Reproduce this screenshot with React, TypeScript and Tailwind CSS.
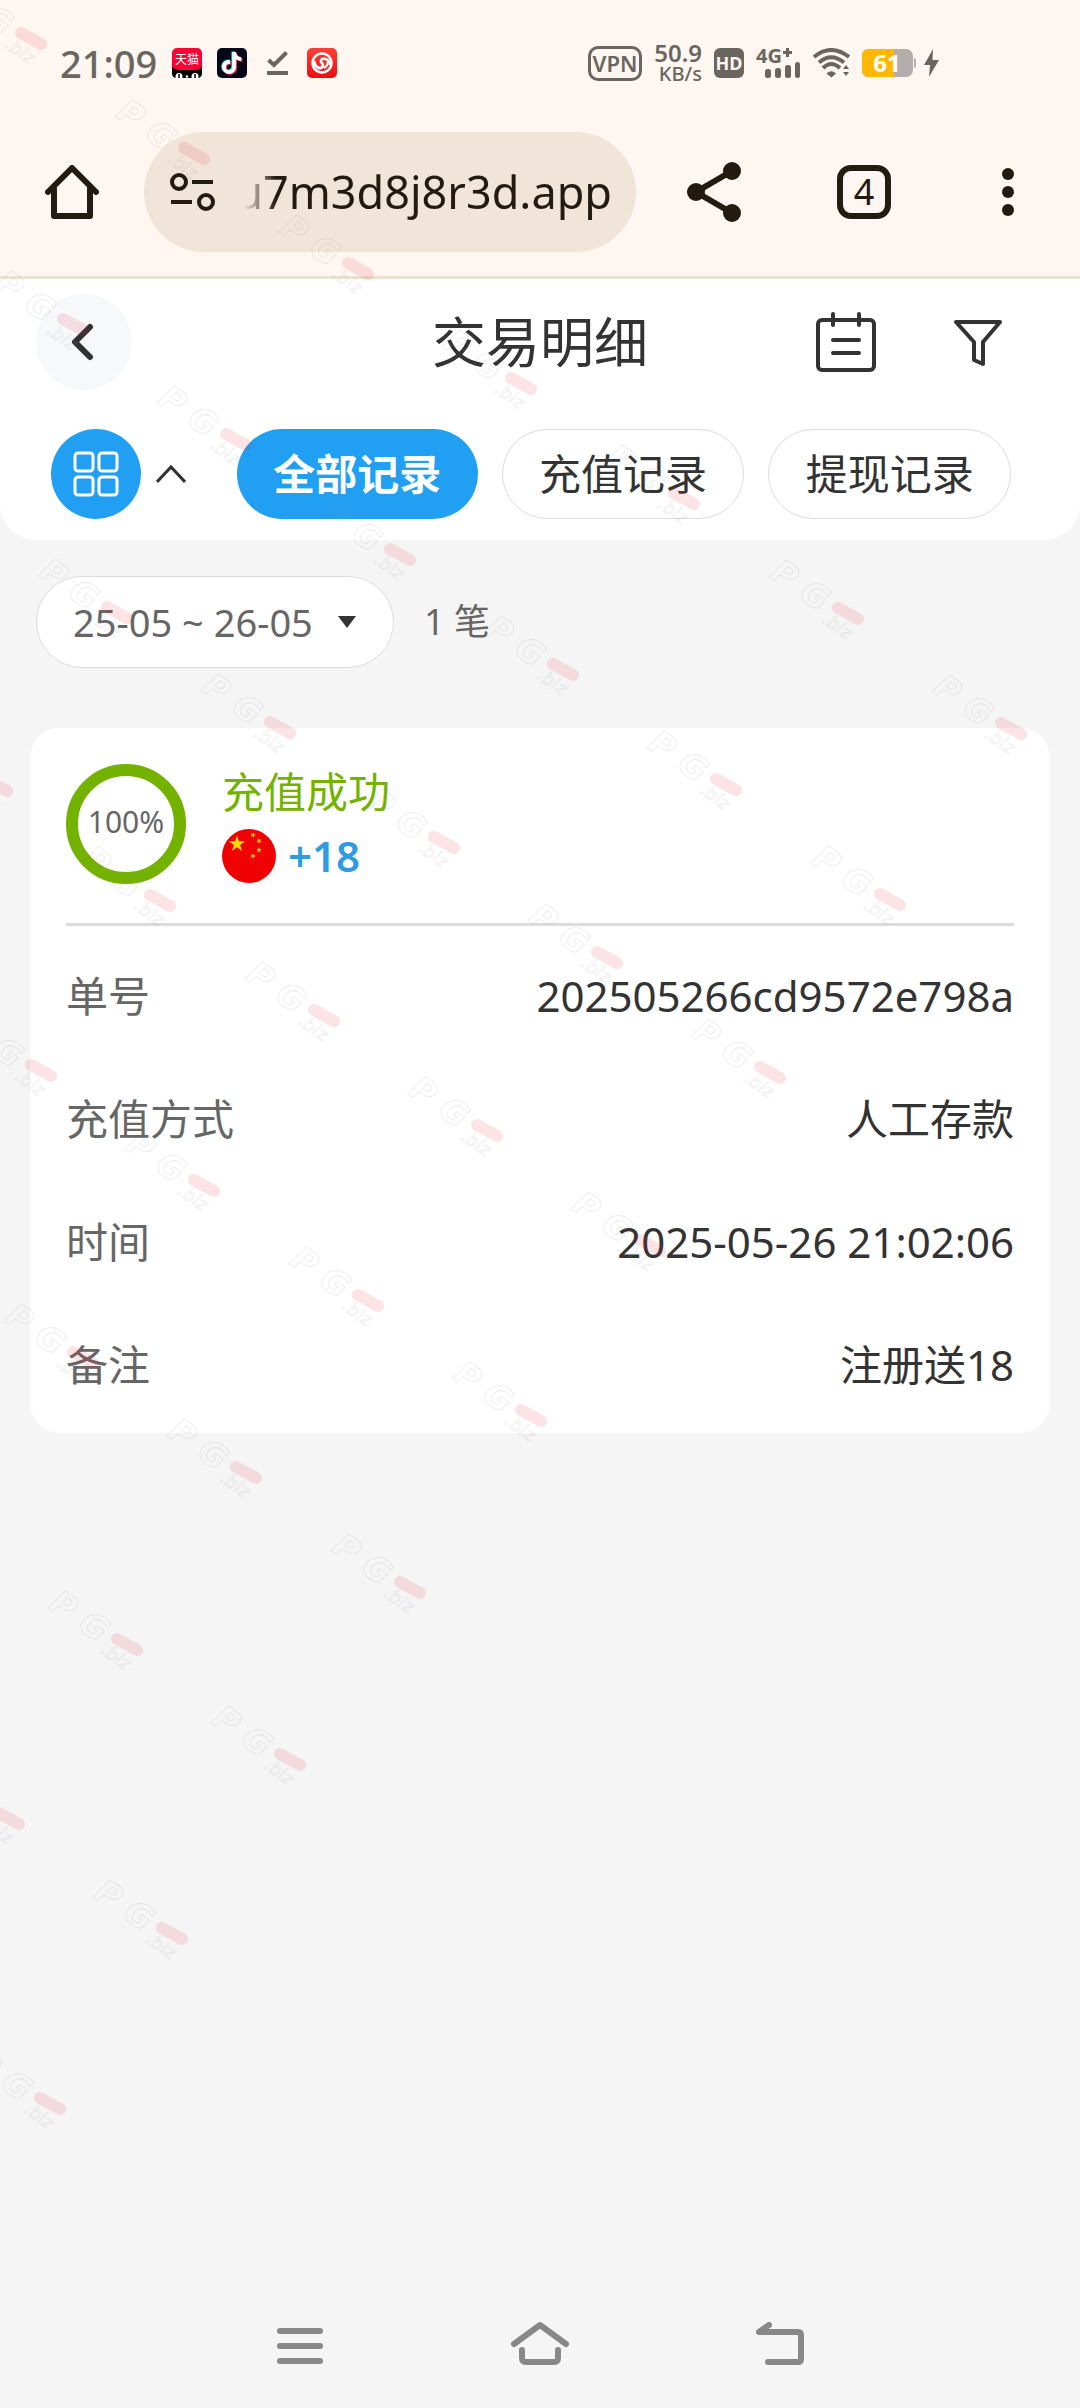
import { useState } from 'react';

const tabs = ['全部记录', '充值记录', '提现记录'];

const details = [
  { label: '单号', value: '202505266cd9572e798a' },
  { label: '充值方式', value: '人工存款' },
  { label: '时间', value: '2025-05-26 21:02:06' },
  { label: '备注', value: '注册送18' },
];

// Diagonal runs of the watermark: start point and number of marks in the run
const markRuns = [
  { x: 31, y: 39, count: 7 },
  { x: 73, y: 325, count: 6 },
  { x: 117, y: 613, count: 5 },
  { x: -3, y: 786, count: 5 },
  { x: 41, y: 1071, count: 4 },
  { x: 83, y: 1358, count: 3 },
  { x: 127, y: 1645, count: 2 },
  { x: 9, y: 1819, count: 2 },
  { x: 50, y: 2104, count: 1 },
];

const marks = markRuns.flatMap((run) =>
  Array.from({ length: run.count }, (_, i) => ({ x: run.x + Math.round(i * 163.3), y: run.y + i * 115 })),
);

const TIKTOK =
  'M448,209.91a210.06,210.06,0,0,1-122.77-39.25V349.38A162.55,162.55,0,1,1,185,188.31V278.2a74.62,74.62,0,1,0,52.23,71.18V0l88,0a121.18,121.18,0,0,0,1.86,22.17h0A122.18,122.18,0,0,0,381,102.39a121.43,121.43,0,0,0,67,20.14Z';

const STAR = 'M0,-10 L2.3,-3.1 L9.5,-3.1 L3.7,1.2 L5.9,8.1 L0,3.9 L-5.9,8.1 L-3.7,1.2 L-9.5,-3.1 L-2.3,-3.1 Z';

function Watermark() {
  return (
    <div className="pointer-events-none absolute inset-0 overflow-hidden" aria-hidden="true">
      {marks.map((m) => (
        <svg
          key={`${m.x}-${m.y}`}
          className="absolute h-[120px] w-[140px] overflow-visible"
          style={{ left: m.x - 100, top: m.y - 75 }}
          viewBox="-100 -75 140 120"
        >
          <g transform="rotate(35)" fill="none" stroke="#8a8f96" fontFamily="'DejaVu Sans', sans-serif" fontStyle="italic">
            <text x="-87" y="15" fontSize="33" fontWeight="bold" strokeOpacity="0.17">P</text>
            <text x="-51" y="15" fontSize="33" fontWeight="bold" strokeOpacity="0.17">G</text>
            <text x="-18" y="22" fontSize="18" strokeOpacity="0.13">.biz</text>
          </g>
          <path d="M-10 -6 L10 5" fill="none" stroke="#e0243c" strokeOpacity="0.13" strokeWidth="12" strokeLinecap="round" />
        </svg>
      ))}
    </div>
  );
}

function StatusBar() {
  return (
    <div className="flex h-[126px] items-center justify-between pr-[141px] pl-[60px] text-[#6b6560]">
      <div className="flex items-center gap-[15px]">
        <span className="text-[38px] leading-none font-medium">21:09</span>
        <svg className="h-[30px] w-[30px]" viewBox="0 0 30 30">
          <rect width="30" height="30" rx="5" fill="#ff0036" />
          <path d="M0 19 Q4 23 9 22 H21 Q26 23 30 19 V25 Q30 30 25 30 H5 Q0 30 0 25 Z" fill="#000" />
          <circle cx="7" cy="28.500" r="3.500" fill="#fff" />
          <circle cx="23" cy="28.500" r="3.500" fill="#fff" />
          <path d="M7 26 v4 M23 26 v4" stroke="#000" strokeWidth="1.500" />
          <circle cx="15" cy="28.500" r="1.200" fill="#fff" />
          <text x="15" y="16" textAnchor="middle" fontSize="12" fill="#fff" fontFamily="'Noto Sans CJK SC', sans-serif">天猫</text>
        </svg>
        <svg className="h-[30px] w-[30px]" viewBox="0 0 30 30">
          <rect width="30" height="30" rx="5" fill="#060818" />
          <g transform="translate(5 4) scale(0.043)">
            <path d={TIKTOK} fill="#25f4ee" transform="translate(-18 -14)" />
            <path d={TIKTOK} fill="#fe2c55" transform="translate(24 18)" />
            <path d={TIKTOK} fill="#fff" />
          </g>
        </svg>
        <svg className="h-[30px] w-[30px]" viewBox="0 0 30 30" fill="none" stroke="currentColor" strokeWidth="4">
          <path d="M6.500 12 L12 17 L24.500 4.500" />
          <path d="M5 25 H26" />
        </svg>
        <svg className="h-[30px] w-[30px]" viewBox="0 0 30 30" fill="none" stroke="#fff">
          <defs>
            <linearGradient id="coil" x1="0" y1="0" x2="0" y2="1">
              <stop offset="0" stopColor="#fb4136" />
              <stop offset="1" stopColor="#f00c12" />
            </linearGradient>
          </defs>
          <rect width="30" height="30" rx="5" fill="url(#coil)" stroke="none" />
          <circle cx="15" cy="15" r="9.500" strokeWidth="2.500" />
          <path d="M7 13 C8 20 14 22 16 18 C17 15 13 15 14 12.500 C15 9.500 22 10 23 17" strokeWidth="2.800" />
          <path d="M17 20 Q21 18 20.500 14" strokeWidth="2" />
        </svg>
      </div>

      <div className="flex items-center gap-3">
        <span className="flex h-[35px] w-[54px] items-center justify-center rounded-[10px] border-3 border-current text-[22px] leading-none font-semibold">
          VPN
        </span>
        <span className="flex w-[48px] flex-col items-end">
          <span className="text-[24px] leading-[22px] font-semibold">50.9</span>
          <span className="text-[20px] leading-[20px] font-medium">KB/s</span>
        </span>
        <span className="flex h-[30px] w-[30px] items-center justify-center rounded-[6px] bg-[#6b6560] text-[18px] leading-none font-bold text-[#fef6f0]">
          HD
        </span>
        <svg className="h-[30px] w-[45px] overflow-visible" viewBox="0 0 45 30" fill="currentColor">
          <text x="0" y="15" fontSize="20" fontWeight="bold" fontFamily="'Noto Sans', sans-serif">4G</text>
          <path d="M27 4.500 h9 M31.500 0 v9" stroke="currentColor" strokeWidth="3" />
          <rect x="9" y="21" width="6" height="9" rx="2.500" />
          <rect x="19" y="20" width="6" height="10" rx="2.500" />
          <rect x="29" y="17" width="6" height="13" rx="2.500" />
          <rect x="39" y="14" width="5" height="16" rx="2.500" />
        </svg>
        <svg className="h-[30px] w-[37px]" viewBox="0 0 37 30" fill="none" stroke="currentColor" strokeWidth="4">
          <path d="M1 9 Q18 -5 36 9" />
          <path d="M6 14.500 Q18 4 31 14.500" />
          <path d="M10 20 Q18 12 27 20" />
          <path d="M13.500 25.500 Q18 21 23 25.500 L18.500 29.500 Z" fill="currentColor" stroke="none" />
          <path d="M30 21 l3 -4 l3 4 Z M30 24 h6 l-3 4 Z" fill="currentColor" stroke="none" />
        </svg>
        <svg className="h-[28px] w-[54px] overflow-visible" viewBox="0 0 54 28">
          <rect width="51" height="28" rx="7" fill="#b5adab" />
          <path d="M52 9 q2 0 2 3 v4 q0 3 -2 3 Z" fill="#b5adab" />
          <path d="M7 0 H32 V28 H7 Q0 28 0 21 V7 Q0 0 7 0 Z" fill="#ffb800" />
          <text x="25" y="23" textAnchor="middle" fontSize="24" fontWeight="bold" fill="#fff" fontFamily="'Noto Sans', sans-serif">61</text>
        </svg>
        <svg className="-ml-1 h-[28px] w-[15px]" viewBox="0 0 15 28" fill="currentColor">
          <path d="M9 0 L0 16 H6 L5 28 L15 11 H8.500 Z" />
        </svg>
      </div>
    </div>
  );
}

function BrowserBar() {
  return (
    <div className="flex items-center pt-1.5 pb-6 text-[#231a12]">
      <button className="flex h-[120px] w-36 items-center justify-center" aria-label="Home">
        <svg className="h-[54px] w-[54px]" viewBox="0 0 54 54" fill="none" stroke="currentColor" strokeWidth="6" strokeLinejoin="round" strokeLinecap="round">
          <path d="M3 27 L27 3 L51 27" />
          <path d="M9 24 V51 H45 V24" />
        </svg>
      </button>

      <div className="flex h-[120px] min-w-0 flex-1 items-center gap-4 rounded-full bg-[#f1e4d8] px-6">
        <svg className="h-[48px] w-[48px] shrink-0" viewBox="0 0 48 48" fill="none" stroke="currentColor" strokeWidth="4">
          <circle cx="11" cy="14" r="7" />
          <path d="M24 14 H45" />
          <path d="M3 34 H24" />
          <circle cx="38" cy="34" r="7" />
        </svg>
        <input
          className="w-full min-w-0 bg-transparent text-right text-[45px] leading-[60px] outline-none [mask-image:linear-gradient(to_right,transparent_12px,#000_44px)]"
          aria-label="Address"
          defaultValue="u7m3d8j8r3d.app"
        />
      </div>

      <div className="flex pl-3">
        <button className="flex h-[120px] w-36 items-center justify-center" aria-label="Share">
          <svg className="h-[60px] w-[66px]" viewBox="0 0 66 60" fill="currentColor" stroke="currentColor" strokeWidth="6">
            <path d="M45 9 L9 30 L45 51" fill="none" />
            <circle cx="45" cy="9" r="9" stroke="none" />
            <circle cx="9" cy="30" r="9" stroke="none" />
            <circle cx="45" cy="51" r="9" stroke="none" />
          </svg>
        </button>
        <button className="flex h-[120px] w-36 items-center justify-center" aria-label="Tabs">
          <span className="flex h-[54px] w-[54px] items-center justify-center rounded-[14px] border-6 border-current text-[36px] leading-none">
            4
          </span>
        </button>
        <button className="flex h-[120px] w-36 items-center justify-center" aria-label="Menu">
          <svg className="h-[48px] w-[12px]" viewBox="0 0 12 48" fill="currentColor">
            <circle cx="6" cy="6" r="6" />
            <circle cx="6" cy="24" r="6" />
            <circle cx="6" cy="42" r="6" />
          </svg>
        </button>
      </div>
    </div>
  );
}

function PageHeader() {
  const [active, setActive] = useState(0);

  return (
    <header className="rounded-b-[36px] bg-white pt-[15px] pb-[21px]">
      <div className="grid h-[96px] grid-cols-[1fr_auto_1fr] items-center pr-[78px] pl-9">
        <button className="flex h-[96px] w-[96px] items-center justify-center rounded-full bg-[#f6f8fa]" aria-label="返回">
          <svg className="h-[38px] w-[24px]" viewBox="0 0 24 38" fill="none" stroke="#303133" strokeWidth="6" strokeLinecap="round" strokeLinejoin="round">
            <path d="M18 4 L3 19 L18 34" />
          </svg>
        </button>
        <h1 className="pl-[42px] text-[54px] leading-[72px]">交易明细</h1>
        <div className="flex items-center justify-end gap-[78px]">
          <button aria-label="明细">
            <svg className="h-[60px] w-[60px]" viewBox="0 0 60 60" fill="none" stroke="#333" strokeWidth="4" strokeLinecap="round">
              <rect x="2" y="8" width="56" height="50" rx="4" />
              <path d="M17 2 V13 M43 2 V13" />
              <path d="M17 28 H43 M17 41 H43" />
            </svg>
          </button>
          <button aria-label="筛选">
            <svg className="h-[48px] w-[48px]" viewBox="0 0 48 48" fill="none" stroke="#333" strokeWidth="4" strokeLinejoin="round">
              <path d="M2 4 H46 L29 24 V46 L20 42 V24 Z" />
            </svg>
          </button>
        </div>
      </div>

      <div className="mt-[39px] flex items-center pr-[69px] pl-[51px]">
        <button className="flex h-[90px] w-[90px] items-center justify-center rounded-full bg-[#209ff3]" aria-label="全部分类">
          <svg className="h-[46px] w-[46px]" viewBox="0 0 46 46" fill="none" stroke="#fff" strokeWidth="3">
            <rect x="2" y="2" width="18" height="18" rx="3" />
            <rect x="26" y="2" width="18" height="18" rx="3" />
            <rect x="2" y="26" width="18" height="18" rx="3" />
            <rect x="26" y="26" width="18" height="18" rx="3" />
          </svg>
        </button>
        <button className="ml-[15px]" aria-label="收起">
          <svg className="h-[20px] w-[30px]" viewBox="0 0 30 20" fill="none" stroke="#303133" strokeWidth="3">
            <path d="M1 18 L15 3 L29 18" />
          </svg>
        </button>
        <div className="ml-[51px] flex flex-1 gap-6">
          {tabs.map((tab, i) => (
            <button
              key={tab}
              onClick={() => setActive(i)}
              className={
                active === i
                  ? 'h-[90px] flex-1 rounded-full bg-[#209ff3] text-[42px] leading-none font-bold text-white'
                  : 'h-[90px] flex-1 rounded-full border border-[#dcdcdc] bg-white text-[42px] leading-none'
              }
            >
              {tab}
            </button>
          ))}
        </div>
      </div>
    </header>
  );
}

function RecordCard() {
  return (
    <section className="mx-[30px] mt-[60px] rounded-[30px] bg-white px-9 pt-9 pb-[7px]">
      <div className="flex items-center gap-9 pb-[39px]">
        <div className="flex h-[120px] w-[120px] items-center justify-center rounded-full border-12 border-[#74b200] pb-1 text-[30px] leading-none text-[#666]">
          100%
        </div>
        <div>
          <p className="text-[42px] leading-[54px] text-[#74b200]">充值成功</p>
          <div className="mt-2.5 flex items-center gap-3">
            <svg className="h-[54px] w-[54px]" viewBox="0 0 54 54">
              <circle cx="27" cy="27" r="27" fill="#f00000" />
              <g fill="#ffda00">
                <path d={STAR} transform="translate(15 15) scale(0.85)" />
                <path d={STAR} transform="translate(31 6) rotate(20) scale(0.3)" />
                <path d={STAR} transform="translate(37 12) rotate(45) scale(0.3)" />
                <path d={STAR} transform="translate(37 21) scale(0.3)" />
                <path d={STAR} transform="translate(31 27) rotate(20) scale(0.3)" />
              </g>
            </svg>
            <span className="text-[42px] leading-[54px] font-semibold text-[#2f9be3]">+18</span>
          </div>
        </div>
      </div>

      <dl className="border-t-3 border-[#dcdcdc] pt-2">
        {details.map((row) => (
          <div key={row.label} className="flex h-[123px] items-center justify-between text-[42px] leading-[60px]">
            <dt className="text-[#666]">{row.label}</dt>
            <dd>{row.value}</dd>
          </div>
        ))}
      </dl>
    </section>
  );
}

function NavBar() {
  return (
    <nav className="mt-auto grid h-[130px] grid-cols-3 items-center justify-items-center px-[180px] text-[#888]">
      <button aria-label="Recents">
        <svg className="h-[44px] w-[46px]" viewBox="0 0 46 44" fill="none" stroke="currentColor" strokeWidth="6" strokeLinecap="round">
          <path d="M3 10 H43 M3 25 H43 M3 40 H43" />
        </svg>
      </button>
      <button aria-label="Home screen">
        <svg className="h-[44px] w-[58px]" viewBox="0 0 58 44" fill="none" stroke="currentColor" strokeWidth="6" strokeLinecap="round" strokeLinejoin="round">
          <path d="M3 23 L29 4 L55 23" />
          <path d="M11 29 V37 Q11 41 15 41 H43 Q47 41 47 37 V29" />
        </svg>
      </button>
      <button aria-label="Back">
        <svg className="h-[44px] w-[48px]" viewBox="0 0 48 44" fill="none" stroke="currentColor" strokeWidth="6" strokeLinecap="round" strokeLinejoin="round">
          <path d="M13 4 L3 11 H42 Q45 11 45 14 V38 Q45 41 42 41 H12" />
        </svg>
      </button>
    </nav>
  );
}

export default function App() {
  return (
    <div className="relative flex min-h-screen flex-col bg-[#f5f5f5] font-['Noto_Sans','Noto_Sans_CJK_SC',sans-serif] text-[#333]">
      <div className="border-b-3 border-[#ece2cf] bg-[#fef6f0]">
        <StatusBar />
        <BrowserBar />
      </div>

      <PageHeader />

      <div className="mt-9 flex items-center gap-[30px] pl-9 text-[#666]">
        <div className="relative">
          <select
            className="h-[92px] w-[358px] appearance-none rounded-full border border-[#dcdcdc] bg-white pl-9 text-[38px] outline-none"
            aria-label="日期范围"
            defaultValue="range"
          >
            <option value="range">25-05 ~ 26-05</option>
          </select>
          <svg className="pointer-events-none absolute top-10 right-[38px] h-[12px] w-[18px]" viewBox="0 0 18 12" fill="#333">
            <path d="M0 0 H18 L9 12 Z" />
          </svg>
        </div>
        <span className="text-[36px] leading-[54px]">1 笔</span>
      </div>

      <RecordCard />
      <NavBar />
      <Watermark />
    </div>
  );
}
